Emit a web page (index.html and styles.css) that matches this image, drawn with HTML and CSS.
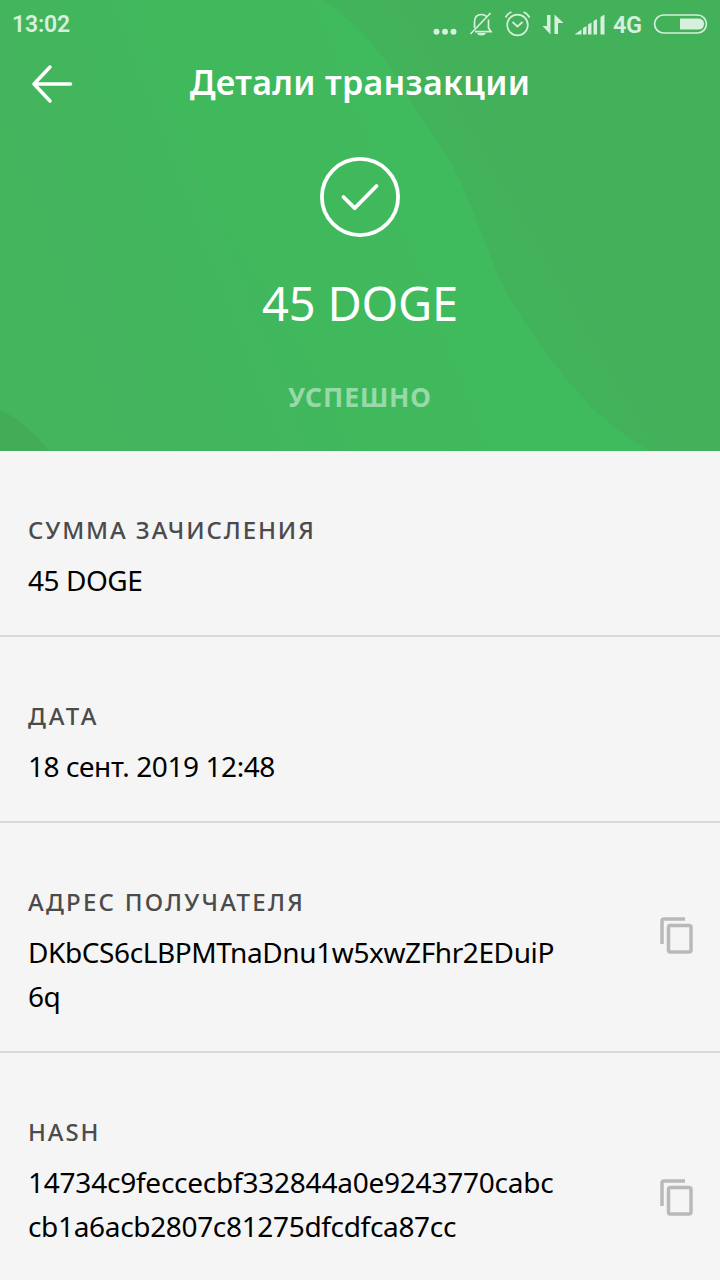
FILE: index.html
```html
<!DOCTYPE html>
<html lang="ru">
<head>
<meta charset="utf-8">
<title>Детали транзакции</title>
<link rel="stylesheet" href="styles.css">
</head>
<body>
<main class="screen">
  <section class="hero">
    <svg class="hero-bg" width="720" height="451" viewBox="0 0 720 451" aria-hidden="true">
      <defs>
        <linearGradient id="base" gradientUnits="userSpaceOnUse" x1="60" y1="300" x2="400" y2="170">
          <stop offset="0" stop-color="#44b45d"/>
          <stop offset="1" stop-color="#3fba5d"/>
        </linearGradient>
        <linearGradient id="shade" gradientUnits="userSpaceOnUse" x1="380" y1="230" x2="520" y2="150">
          <stop offset="0" stop-color="#40b85c"/>
          <stop offset="0.5" stop-color="#42b35b"/>
          <stop offset="1" stop-color="#43b05a"/>
        </linearGradient>
      </defs>
      <rect width="720" height="451" fill="url(#base)"/>
      <path d="M125 0C160 90 195 190 260 280C300 340 330 390 350 451H720V0Z" fill="#3fba5d" opacity=".35"/>
      <path d="M322 0C390 45 405 100 440 145C480 205 485 270 530 330C565 380 595 420 650 451H720V0Z" fill="url(#shade)"/>
      <path d="M0 409Q28 424 49 451H0Z" fill="#43ac56"/>
    </svg>
    <div class="status-bar">
      <span class="clock">13:02</span>
      <svg class="status-icons" width="176" height="36" viewBox="430 6 176 36" aria-hidden="true">
        <g fill="#d6f0dd">
          <circle cx="436.500" cy="31.700" r="3"/><circle cx="445" cy="31.700" r="3"/><circle cx="453.500" cy="31.700" r="3"/>
          <path d="M477 33h9q-1 2.500-4.500 2.500T477 33zM547 15h3.500v19.500L542.500 26h4.500zM554.500 14.500l9 8.500H558v11h-3.500z"/>
          <path d="M574.500 34.500l7-5v5zM583 28l3.500-2v8.500H583zM588 24.500l3.500-2v12H588zM593.500 21l3.500-2v15.500h-3.500zM600.500 17l4-2.500v20h-4z"/>
        </g>
        <g fill="none" stroke="#d6f0dd" stroke-width="1.700">
          <path d="M474.500 28v-6q0-7.500 7-7.500 3 0 5 2M488.500 19.500V28l2.500 3.700H475M490.500 13L470.500 34"/>
          <circle cx="517.500" cy="25" r="10.300"/>
          <path d="M512.500 22l5 4.500 5-4.500M505.500 17.500q2-4 6-5.500M529.500 17.500q-2-4-6-5.500"/>
        </g>
      </svg>
      <span class="network">4G</span>
      <svg class="battery" width="56" height="22" viewBox="0 0 56 22" aria-hidden="true">
        <rect x="1.600" y="2" width="51.800" height="18" rx="9" fill="none" stroke="#d6f0dd" stroke-width="1.700"/>
        <path d="M27 5.500h18q6 0 6 5.500T45 16.500H27z" fill="#d6f0dd"/>
      </svg>
    </div>
    <header class="nav">
      <svg class="back" width="44" height="42" viewBox="30 63 44 42" aria-hidden="true">
        <path d="M50 67L34 84L50 101M34 84H70.500" fill="none" stroke="#fff" stroke-width="3.500" stroke-linecap="round" stroke-linejoin="round"/>
      </svg>
      <h1 class="title">Детали транзакции</h1>
    </header>
    <svg class="check" width="80" height="80" viewBox="0 0 80 80" aria-hidden="true">
      <g fill="none" stroke="#fff" stroke-width="3.800" stroke-linecap="round" stroke-linejoin="round">
        <circle cx="40" cy="40" r="38.100"/><path d="M23.500 40L34.700 51.200L56.500 29"/>
      </g>
    </svg>
    <p class="amount">45 DOGE</p>
    <p class="result">УСПЕШНО</p>
  </section>

  <section class="row">
    <div class="info"><h2 class="label label-sum">СУММА ЗАЧИСЛЕНИЯ</h2><p class="value value-sum">45 DOGE</p></div>
  </section>
  <section class="row">
    <div class="info"><h2 class="label label-date">ДАТА</h2><p class="value value-date">18 сент. 2019 12:48</p></div>
  </section>
  <section class="row">
    <div class="info"><h2 class="label label-address">АДРЕС ПОЛУЧАТЕЛЯ</h2><p class="value value-address">DKbCS6cLBPMTnaDnu1w5xwZFhr2EDuiP<br>6q</p></div>
    <svg class="copy" width="34" height="38" viewBox="0 0 34 38" aria-hidden="true"><path d="M2 27V4Q2 2 4 2H25M10 8.500H29Q31 8.500 31 10.500V33Q31 35 29 35H10Q8.500 35 8.500 33V10.500Q8.500 8.500 10 8.500Z"/></svg>
  </section>
  <section class="row">
    <div class="info"><h2 class="label label-hash">HASH</h2><p class="value value-hash">14734c9feccecbf332844a0e9243770cabc<br><span class="hash-end">cb1a6acb2807c81275dfcdfca87cc</span></p></div>
    <svg class="copy copy-low" width="34" height="38" viewBox="0 0 34 38" aria-hidden="true"><path d="M2 27V4Q2 2 4 2H25M10 8.500H29Q31 8.500 31 10.500V33Q31 35 29 35H10Q8.500 35 8.500 33V10.500Q8.500 8.500 10 8.500Z"/></svg>
  </section>
</main>
</body>
</html>
```
FILE: styles.css
```css
* { box-sizing: border-box; }
body, h1, h2, p { margin: 0; }
body { background: #f5f5f5; color: #000; font-family: "Noto Sans", sans-serif; }
svg { display: block; flex-shrink: 0; }
.screen { width: 720px; height: 1280px; overflow: hidden; background: #f5f5f5; }
.hero { position: relative; isolation: isolate; height: 451px; display: flex; flex-direction: column; align-items: center; color: #fff; }
.hero-bg { position: absolute; inset: 0; z-index: -1; }
.status-bar { width: 100%; height: 50px; padding: 6px 10px 0 12px; display: flex; align-items: flex-start; color: #d6f0dd; font-family: Roboto, sans-serif; font-weight: 600; line-height: 38px; }
.clock { font-size: 23px; width: 418px; letter-spacing: -0.200px; }
.network { font-size: 23.500px; width: 30px; margin-left: 7px; letter-spacing: -0.500px; }
.battery { margin: 7px 0 0 10px; }
.nav { width: 100%; height: 68px; padding: 13px 30px 0; display: grid; grid-template-columns: 44px 1fr 44px; align-items: start; }
.title { font-size: 34px; font-weight: 600; line-height: 38px; text-align: center; white-space: nowrap; letter-spacing: 0.300px; }
.check { margin-top: 39px; }
.amount { margin-top: 36px; font-size: 47px; line-height: 60px; white-space: nowrap; letter-spacing: -0.200px; }
.result { margin-top: 46px; font-size: 26.500px; line-height: 36px; font-weight: 700; color: #98d9a8; letter-spacing: 0.900px; }
.row { display: flex; justify-content: space-between; align-items: flex-start; padding: 65px 26px 33px 28px; border-bottom: 2px solid #d8d8d8; }
.label { font-size: 24px; line-height: 28px; font-weight: 500; color: #4b4b4b; white-space: nowrap; }
.label-sum { letter-spacing: 1.900px; }
.label-date { letter-spacing: 3px; }
.label-address { letter-spacing: 2.250px; }
.label-hash { letter-spacing: 1.900px; }
.value { margin-top: 14px; font-size: 28px; line-height: 44px; white-space: nowrap; }
.value-sum { letter-spacing: -0.450px; }
.value-date { letter-spacing: -0.430px; }
.value-address { letter-spacing: -0.400px; }
.value-hash { letter-spacing: -0.230px; }
.hash-end { letter-spacing: -0.330px; }
.copy { margin-top: 29px; fill: none; stroke: #b9b9b9; stroke-width: 3.500; }
.copy-low { margin-top: 61px; }
```
